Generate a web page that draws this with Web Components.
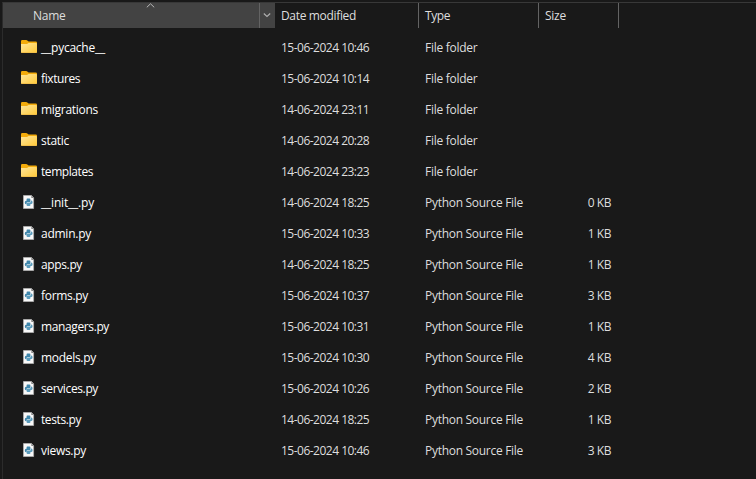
<!DOCTYPE html>
<html lang="en">
<head>
<meta charset="utf-8">
<title>Files</title>
<style>
html, body { margin: 0; height: 100%; background: #191919; overflow: hidden; }
body { font: 12px/16px "Open Sans", "Noto Sans", sans-serif; color: #dedede; }
</style>
</head>
<body>
<file-explorer></file-explorer>
<script>
// Text run whose tracking is adjusted to a nominal width.
customElements.define('fit-text', class extends HTMLElement {
  connectedCallback() {
    const root = this.attachShadow({ mode: 'open' });
    root.innerHTML = '<style>:host{display:inline-block;white-space:pre}</style><slot></slot>';
    const target = parseFloat(this.getAttribute('w'));
    const n = this.textContent.length;
    const natural = this.getBoundingClientRect().width;
    if (target) this.style.letterSpacing = ((target - natural) / n).toFixed(3) + 'px';
  }
});

customElements.define('file-icon', class extends HTMLElement {
  connectedCallback() {
    const root = this.attachShadow({ mode: 'open' });
    const folder = `<svg width="16" height="16" viewBox="0 0 16 16">
      <defs><linearGradient id="g" x1="0" y1="0" x2="1" y2="1"><stop offset="0" stop-color="#ffe69b"/><stop offset="1" stop-color="#ffc937"/></linearGradient></defs>
      <path d="M0 2.2Q0 1 1.2 1H5.2Q5.8 1 6.3 1.5L7.6 2.6H14.8Q16 2.6 16 3.8V8H0Z" fill="#f3ab0b"/>
      <path d="M0 5H6L7.6 4H15Q16 4 16 5V13Q16 14 15 14H1Q0 14 0 13Z" fill="url(#g)"/>
      <path d="M.5 13.5H15.5" stroke="#f3c04a"/></svg>`;
    const python = `<svg width="16" height="16" viewBox="0 0 16 16">
      <path d="M2.5 1.5H10.5L12.6 3.7V14.5H2.5Z" fill="#f8f8f8" stroke="#b0b0b0" stroke-width=".8"/>
      <path d="M10.3 1.5V4H12.8Z" fill="#858585"/>
      <path d="M6.3 4.6H8.4Q9.4 4.6 9.4 5.6V7.4Q9.4 8.1 8.4 8.1H6.6Q5.6 8.1 5.6 9.3V10.2H5Q3.8 10.2 3.8 8.5 3.8 6.7 5 6.7H5.6V5.3Q5.6 4.6 6.3 4.6Z" fill="#3f86ab"/>
      <path d="M9.9 6.5Q11.6 6.3 11.6 8.2 11.6 10 10.4 10H9.4V11Q9.4 11.9 8.4 11.9H6.6Q5.6 11.9 5.6 11V9.4Q5.6 8.5 6.6 8.5H8.9Q9.9 8.5 9.9 7.8Z" fill="#5b9cbc"/></svg>`;
    root.innerHTML = `<style>:host{display:block;width:16px;height:16px}svg{display:block}</style>` +
      (this.getAttribute('kind') === 'folder' ? folder : python);
  }
});

customElements.define('file-row', class extends HTMLElement {
  connectedCallback() {
    this.attachShadow({ mode: 'open' }).innerHTML = `<style>
      :host{display:grid;grid-template-columns:260px 144px 120px 66px;height:31px;align-items:center}
      .name{display:flex;align-items:center;gap:4px;color:#fff}
      .size{text-align:right}
      ::slotted(file-icon){margin-top:-2px}
      </style><div class="name"><slot name="icon"></slot><slot name="name"></slot></div>
      <div><slot name="date"></slot></div><div><slot name="type"></slot></div><div class="size"><slot name="size"></slot></div>`;
  }
});

customElements.define('column-header', class extends HTMLElement {
  connectedCallback() {
    const active = this.hasAttribute('active');
    this.attachShadow({ mode: 'open' }).innerHTML = `<style>
      :host{display:flex;box-sizing:border-box;height:25px;padding-left:6px;align-items:center;border-right:1px solid #636363}
      :host([active]){background:#434343;border:0;padding-left:30px;position:relative}
      .menu{margin-left:auto;box-sizing:border-box;width:16px;height:25px;border-left:1px solid #636363}
      .sort{position:absolute;left:143px;top:0}
      svg{display:block}
      </style><slot></slot>` + (active ? `
      <svg class="sort" width="9" height="5"><path d="M.8 4.3L4.5 .8L8.2 4.3" fill="none" stroke="#b8b8b8"/></svg>
      <span class="menu"><svg width="15" height="25"><path d="M3.8 10.5L7 13.5L10.2 10.5" fill="none" stroke="#b0b0b0" stroke-width="1.1"/></svg></span>` : '');
  }
});

const files = [
  ['__pycache__', 64, '15-06-2024 10:46'],
  ['fixtures', 39.2, '15-06-2024 10:14'],
  ['migrations', 57, '14-06-2024 23:11'],
  ['static', 28, '14-06-2024 20:28'],
  ['templates', 52, '14-06-2024 23:23'],
  ['__init__.py', 53, '14-06-2024 18:25', '0 KB'],
  ['admin.py', 50, '15-06-2024 10:33', '1 KB'],
  ['apps.py', 41, '14-06-2024 18:25', '1 KB'],
  ['forms.py', 47, '15-06-2024 10:37', '3 KB'],
  ['managers.py', 68, '15-06-2024 10:31', '1 KB'],
  ['models.py', 55, '15-06-2024 10:30', '4 KB'],
  ['services.py', 57, '15-06-2024 10:26', '2 KB'],
  ['tests.py', 40, '14-06-2024 18:25', '1 KB'],
  ['views.py', 45, '15-06-2024 10:46', '3 KB']
];

customElements.define('file-explorer', class extends HTMLElement {
  connectedCallback() {
    const rows = files.map(([name, w, date, size]) => `<file-row>
      <file-icon slot="icon" kind="${size ? 'python' : 'folder'}"></file-icon>
      <fit-text slot="name" w="${w}">${name}</fit-text>
      <fit-text slot="date" w="88.2">${date}</fit-text>
      <fit-text slot="type" w="${size ? 98 : 52.3}">${size ? 'Python Source File' : 'File folder'}</fit-text>
      ${size ? `<fit-text slot="size" w="23.2">${size}</fit-text>` : ''}</file-row>`).join('');
    this.attachShadow({ mode: 'open' }).innerHTML = `<style>
      :host{display:block;box-sizing:border-box;height:479px;padding-top:2px;background:#191919}
      .panel{box-sizing:border-box;height:477px;border-top:1px solid #383838;border-left:1px solid #2b2b2b;margin-left:2px}
      .head{display:grid;grid-template-columns:272px 144px 120px 80px}
      .rows{padding:4.5px 0 0 18px}
      </style><div class="panel"><div class="head">
      <column-header active><fit-text w="32.5">Name</fit-text></column-header>
      <column-header><fit-text w="75">Date modified</fit-text></column-header>
      <column-header><fit-text w="25">Type</fit-text></column-header>
      <column-header><fit-text w="21">Size</fit-text></column-header></div>
      <div class="rows">${rows}</div></div>`;
  }
});
</script>
</body>
</html>
